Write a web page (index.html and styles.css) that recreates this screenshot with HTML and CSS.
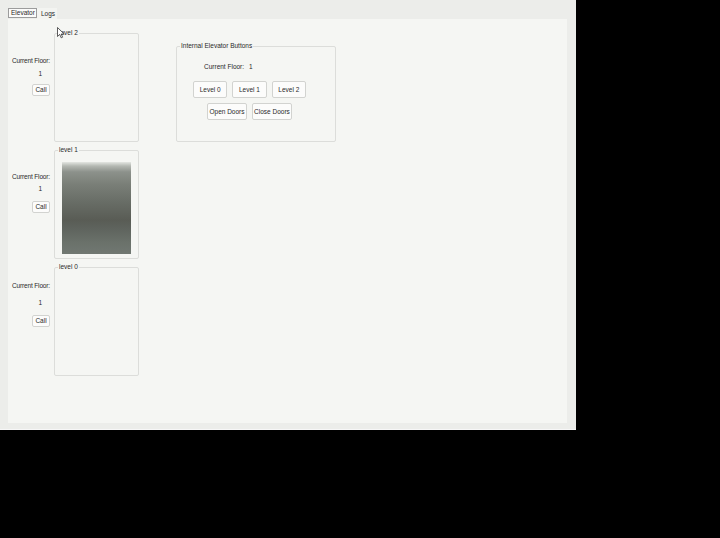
FILE: index.html
```html
<!DOCTYPE html>
<html>
<head>
<meta charset="utf-8">
<link rel="stylesheet" href="styles.css">
</head>
<body>
<div class="window">
  <div class="tabs">
    <div class="tab tab-active">Elevator</div>
    <div class="tab">Logs</div>
  </div>
  <div class="panel">
    <div class="floors">
      <div class="floor">
        <div class="side">
          <div class="lbl">Current Floor:</div>
          <div class="num">1</div>
          <button class="btn call">Call</button>
        </div>
        <fieldset class="group shaft"><legend>level 2</legend></fieldset>
      </div>
      <div class="floor">
        <div class="side">
          <div class="lbl">Current Floor:</div>
          <div class="num">1</div>
          <button class="btn call">Call</button>
        </div>
        <fieldset class="group shaft"><legend>level 1</legend><div class="car"></div></fieldset>
      </div>
      <div class="floor">
        <div class="side side-low">
          <div class="lbl">Current Floor:</div>
          <div class="num">1</div>
          <button class="btn call">Call</button>
        </div>
        <fieldset class="group shaft"><legend>level 0</legend></fieldset>
      </div>
    </div>
    <fieldset class="group internal">
      <legend>Internal Elevator Buttons</legend>
      <div class="controls">
        <div class="cur"><span>Current Floor:</span><span class="cur-num">1</span></div>
        <div class="row row-levels">
          <button class="btn lvl">Level 0</button>
          <button class="btn lvl">Level 1</button>
          <button class="btn lvl">Level 2</button>
        </div>
        <div class="row row-doors">
          <button class="btn door">Open Doors</button>
          <button class="btn door">Close Doors</button>
        </div>
      </div>
    </fieldset>
  </div>
  <svg class="cursor" width="8" height="12" viewBox="0 0 8 12"><path d="M0.5 0.5 L0.5 9.5 L2.7 7.4 L4.2 10.8 L5.6 10.2 L4.2 7 L7.2 7 Z" fill="#fff" stroke="#333" stroke-width="0.8" stroke-linejoin="round"/></svg>
</div>
</body>
</html>
```

FILE: styles.css
```css
* { box-sizing: border-box; }
html, body { margin: 0; padding: 0; background: #000; }
body {
  font-family: "Liberation Sans", Arial, sans-serif;
  font-size: 6.5px;
  line-height: 8px;
  color: #2a2a2a;
}
.window {
  position: relative;
  width: 576px;
  height: 430px;
  background: #ecedea;
  border-bottom: 1px solid #f7f7f7;
}
.tabs {
  display: flex;
  align-items: flex-end;
  padding: 8px 0 0 8px;
  height: 19px;
}
.tab {
  height: 11px;
  line-height: 9px;
  padding: 0 2px;
  background: #f3f4f1;
}
.tab-active {
  height: 10px;
  margin-bottom: 1px;
  background: #fbfbfa;
  border: 1px solid #9c9c9c;
  padding: 0 2px;
  line-height: 8px;
  width: 29px;
}
.tab:not(.tab-active) {
  padding: 1px 4px 0 4px;
  width: 20px;
}
.panel {
  margin-left: 8px;
  width: 559px;
  height: 404px;
  background: #f5f6f3;
  display: flex;
  align-items: flex-start;
  padding: 10px 0 0 0;
}
.floors {
  display: flex;
  flex-direction: column;
  gap: 4px;
}
.floor {
  display: flex;
  align-items: flex-start;
  height: 113px;
}
.side {
  width: 46px;
  padding-right: 4px;
  padding-top: 28px;
  display: flex;
  flex-direction: column;
  align-items: flex-end;
}
.side-low { padding-top: 19px; }
.lbl { white-space: nowrap; letter-spacing: -0.15px; }
.num { margin-top: 5px; margin-right: 8px; }
.floor:nth-child(2) .side { padding-top: 27px; }
.floor:nth-child(2) .num { margin-top: 4px; }
.side-low .num { margin-top: 9px; }
.btn {
  font: inherit;
  color: #2a2a2a;
  background: #fcfcfb;
  border: 1px solid #d2d3d0;
  border-radius: 2px;
  padding: 0;
  margin: 0;
}
.call { margin-top: 6px; width: 18px; height: 12px; line-height: 10px; }
.floor:nth-child(2) .call { margin-top: 8px; }
.side-low .call { margin-top: 8px; }
.group {
  margin: 0;
  padding: 0;
  border: 1px solid #dcddda;
  border-radius: 2px;
  min-width: 0;
}
.group legend {
  padding: 0 1px;
  margin-left: 3px;
  line-height: 8px;
}
.shaft {
  width: 85px;
  height: 113px;
}
.car {
  margin: 8px 0 0 7px;
  width: 69px;
  height: 92px;
  background: linear-gradient(to bottom,
    #e4e6e2 0px, #b4b8b2 4px, #8c918b 10px, #7a7f78 22px,
    #686d66 40px, #595c55 58px, #5e635d 66px, #6a716a 80px, #717872 92px);
}
.internal {
  margin-left: 37px;
  margin-top: 13px;
  width: 160px;
  height: 100px;
}
.controls {
  margin-left: 16px;
}
.cur {
  margin: 13px 0 0 11px;
  display: flex;
  gap: 5px;
}
.row {
  width: 113px;
  display: flex;
  justify-content: center;
}
.row-levels { margin-top: 10px; gap: 5px; }
.row-doors { margin-top: 5px; gap: 5px; }
.lvl { width: 35px; height: 17px; }
.door { width: 40px; height: 17px; }
.cursor {
  position: absolute;
  left: 57px;
  top: 27px;
}
```
